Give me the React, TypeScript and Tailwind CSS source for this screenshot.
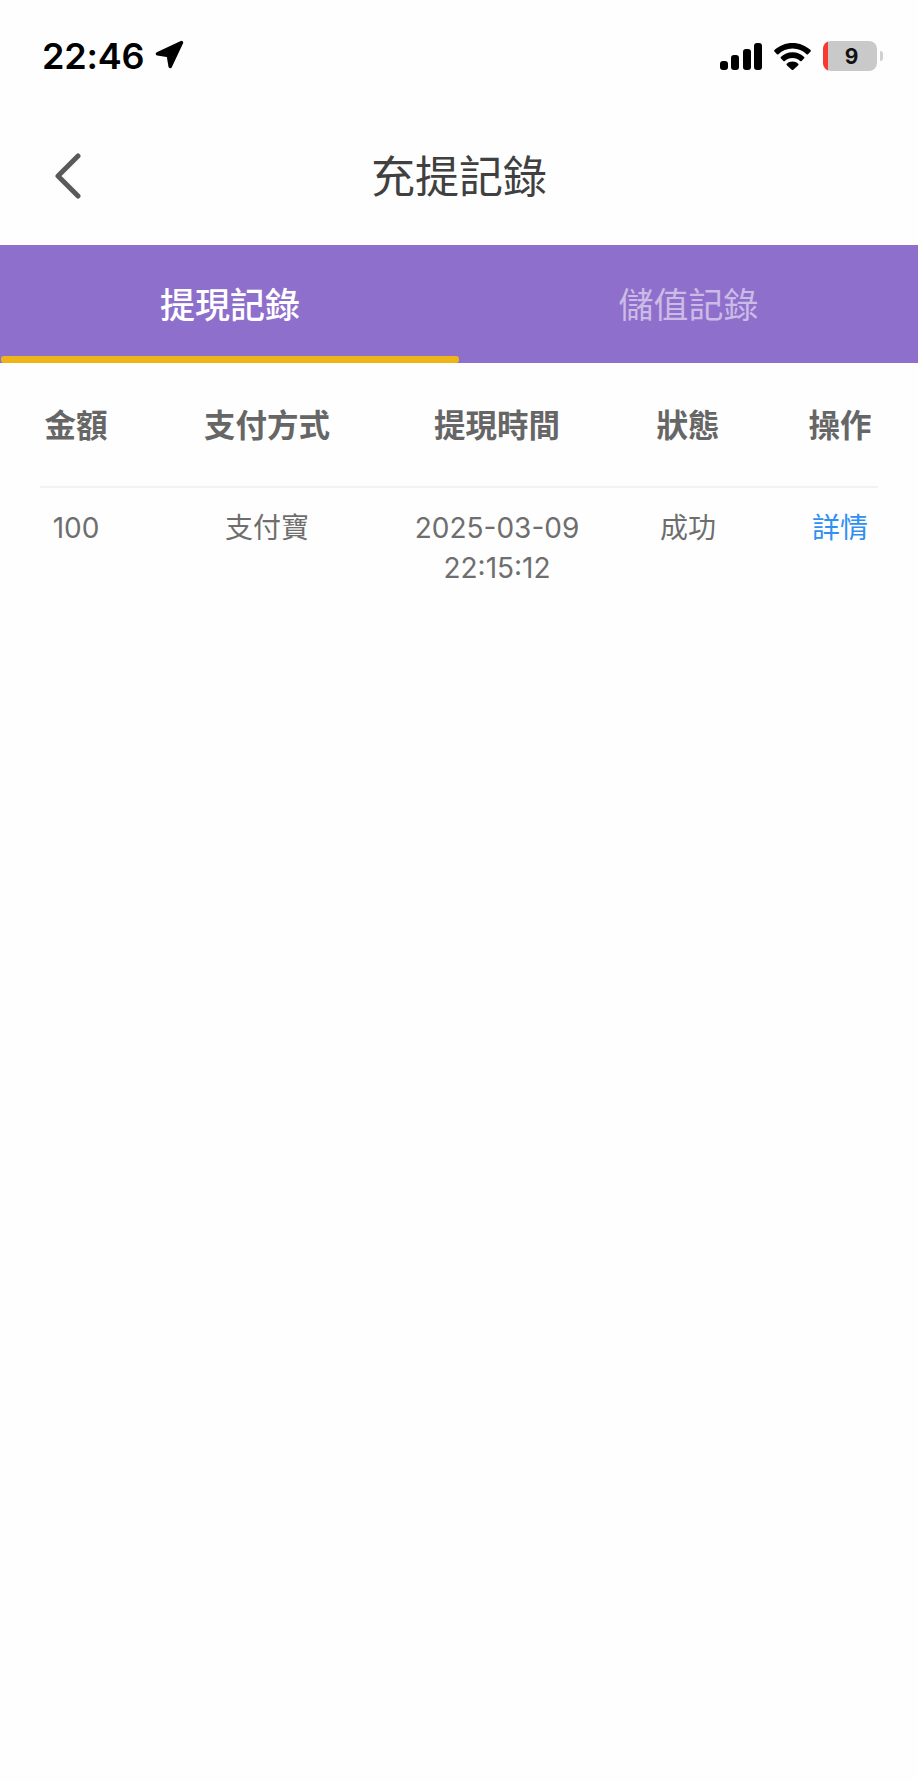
const cjk = 'font-["Inter","Noto_Sans_CJK_TC",sans-serif]';

function StatusBar() {
  return (
    <div className="flex h-[112px] items-center justify-between pl-[42px] pr-[35px]">
      <div className="flex items-center gap-[10px]">
        <span className="font-['Inter',sans-serif] text-[36px] font-semibold leading-none tracking-[-0.2px] text-black">
          22:46
        </span>
        <svg width="30" height="30" viewBox="0 0 30 30" className="mt-[-2px]">
          <path
            d="M27.500 2.500 3.500 13.800 14.400 15.600 16.200 26.500z"
            fill="#000"
            stroke="#000"
            strokeWidth="3.500"
            strokeLinejoin="round"
          />
        </svg>
      </div>
      <div className="flex items-center">
        <svg width="42" height="27" viewBox="0 0 42 27">
          <rect x="0" y="18" width="8" height="9" rx="3" fill="#000" />
          <rect x="11" y="12" width="8" height="15" rx="3" fill="#000" />
          <rect x="23" y="6" width="8" height="21" rx="3" fill="#000" />
          <rect x="34" y="0" width="8" height="27" rx="3" fill="#000" />
        </svg>
        <svg width="37" height="27" viewBox="0 0 37 27" className="ml-[12px]">
          <path
            d="M18.500 0C11.500 0 5.200 2.700.4 7.100c-.4.400-.4 1 0 1.400l2.600 2.700c.4.400 1 .4 1.400 0C8.100 7.700 13 5.600 18.500 5.600s10.400 2.100 14.100 5.600c.4.400 1 .4 1.400 0l2.600-2.700c.4-.4.400-1 0-1.400C31.800 2.700 25.500 0 18.500 0z"
            fill="#000"
          />
          <path
            d="M18.500 9.300c-4.500 0-8.600 1.700-11.700 4.600-.4.400-.4 1 0 1.400l2.600 2.700c.4.400 1 .4 1.400 0 2-1.800 4.700-3 7.700-3s5.700 1.200 7.700 3c.4.400 1 .4 1.400 0l2.600-2.700c.4-.4.400-1 0-1.400-3.100-2.900-7.200-4.600-11.700-4.600z"
            fill="#000"
          />
          <path
            d="M18.500 18.600c-2.200 0-4.200.8-5.700 2.200-.4.400-.4 1 0 1.400l4.900 4.500c.4.400 1.200.4 1.600 0l4.900-4.500c.4-.4.400-1 0-1.400-1.500-1.400-3.500-2.200-5.700-2.200z"
            fill="#000"
          />
        </svg>
        <div className="ml-[12px] flex items-center">
          <div className="flex h-[30px] w-[54px] items-center overflow-hidden rounded-[8px] bg-[#c9c9c9]">
            <div className="h-full w-[5px] bg-[#f8392f]" />
            <span className="flex-1 pr-[2px] text-center font-['Inter',sans-serif] text-[21px] font-bold leading-none text-[#111]">
              9
            </span>
          </div>
          <div className="ml-[3px] h-[10px] w-[3px] rounded-r-full bg-[#cfcfcf]" />
        </div>
      </div>
    </div>
  );
}

function NavBar() {
  return (
    <div className="relative flex h-[133px] items-center justify-center pb-[3px]">
      <button type="button" className="absolute left-[53px] top-[41px]">
        <svg width="30" height="46" viewBox="0 0 30 46" fill="none" className="block">
          <path d="M25 3 5 23l20 20" stroke="#595959" strokeWidth="5" strokeLinecap="round" strokeLinejoin="round" />
        </svg>
      </button>
      <h1 className={`${cjk} text-[44px] font-normal leading-none text-[#404040]`}>充提記錄</h1>
    </div>
  );
}

function Tabs() {
  return (
    <div className="flex h-[118px] bg-[#8e6fcb]">
      <div className="flex w-1/2 flex-col pl-px">
        <div className={`${cjk} flex flex-1 items-center justify-center pt-[10px] text-[35px] font-medium text-white`}>
          提現記錄
        </div>
        <div className="h-[7px] rounded-[3px] bg-[#efb518]" />
      </div>
      <div className={`${cjk} flex w-1/2 items-center justify-center pt-[3px] text-[35px] font-normal text-[#cbbbe6]`}>
        儲值記錄
      </div>
    </div>
  );
}

const rowGrid = 'grid grid-cols-[104px_246px_214px_168px_107px] text-center';

function RecordTable() {
  return (
    <div className="mx-[40px]">
      <div className={`${rowGrid} ${cjk} h-[125px] items-center border-b-2 border-[#f2f2f2] pt-[2px] text-[31.500px] font-bold text-[#666666]`}>
        <div className="pr-[32px]">金額</div>
        <div>支付方式</div>
        <div>提現時間</div>
        <div>狀態</div>
        <div className="pl-[29px]">操作</div>
      </div>
      <div className={`${rowGrid} ${cjk} pt-[20px] text-[28px] leading-[40px] text-[#6e6e6e]`}>
        <div className="pr-[32px]">100</div>
        <div>支付寶</div>
        <div>
          2025-03-09
          <br />
          22:15:12
        </div>
        <div>成功</div>
        <div className="pl-[29px] text-[#2f8ff2]">詳情</div>
      </div>
    </div>
  );
}

export default function App() {
  return (
    <div className="min-h-[1782px] w-[918px] bg-[#fefefe]">
      <StatusBar />
      <NavBar />
      <Tabs />
      <RecordTable />
    </div>
  );
}
